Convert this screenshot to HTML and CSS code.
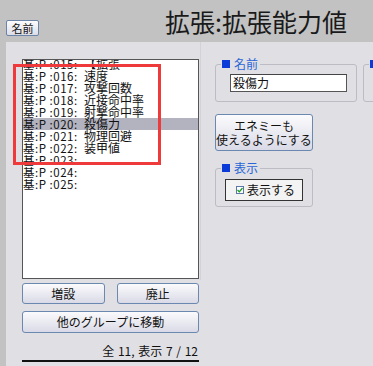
FILE: index.html
```html
<!DOCTYPE html>
<html lang="ja">
<head>
<meta charset="utf-8">
<link rel="stylesheet" href="styles.css">
</head>
<body>
<div class="app">
  <div class="top">
    <button class="name-btn">名前</button>
    <div class="title">拡張:拡張能力値</div>
  </div>
  <div class="main">
    <div class="left">
      <div class="list">
        <div class="rows">
          <div class="row"><span class="code">基:P :015:</span><span class="nm">【拡張</span></div>
          <div class="row"><span class="code">基:P :016:</span><span class="nm">速度</span></div>
          <div class="row"><span class="code">基:P :017:</span><span class="nm">攻撃回数</span></div>
          <div class="row"><span class="code">基:P :018:</span><span class="nm">近接命中率</span></div>
          <div class="row"><span class="code">基:P :019:</span><span class="nm">射撃命中率</span></div>
          <div class="row sel"><span class="code">基:P :020:</span><span class="nm">殺傷力</span></div>
          <div class="row"><span class="code">基:P :021:</span><span class="nm">物理回避</span></div>
          <div class="row"><span class="code">基:P :022:</span><span class="nm">装甲値</span></div>
          <div class="row"><span class="code">基:P :023:</span></div>
          <div class="row"><span class="code">基:P :024:</span></div>
          <div class="row"><span class="code">基:P :025:</span></div>
        </div>
      </div>
      <div class="btns">
        <button class="btn">増設</button>
        <button class="btn">廃止</button>
      </div>
      <button class="btn move">他のグループに移動</button>
      <div class="count">全 11, 表示 7 / 12</div>
      <div class="rule"></div>
    </div>
    <div class="splitter"></div>
    <div class="right">
      <div class="grouprow">
        <fieldset class="grp name-grp">
          <legend><span class="sq"></span>名前</legend>
          <div class="name-body"><div class="input">殺傷力</div></div>
        </fieldset>
        <fieldset class="grp other-grp">
          <legend><span class="sq"></span></legend>
        </fieldset>
      </div>
      <button class="btn enemy">エネミーも<br>使えるようにする</button>
      <fieldset class="grp show-grp">
        <legend><span class="sq"></span>表示</legend>
        <div class="show-body">
          <div class="check-btn"><span class="cb"><svg width="6" height="6" viewBox="0 0 6 6"><path d="M0.5 3 L2.3 4.8 L5.5 1" fill="none" stroke="#1aa01a" stroke-width="1.3"/></svg></span>表示する</div>
        </div>
      </fieldset>
    </div>
  </div>
  <div class="mark"></div>
</div>
</body>
</html>
```

FILE: styles.css
```css
* { box-sizing: border-box; }
html, body { margin: 0; padding: 0; }
body {
  background: #c2c2c2;
  font-family: "Noto Sans CJK JP", sans-serif;
  color: #111;
  overflow: hidden;
}
.app {
  position: relative;
  width: 373px;
  height: 366px;
  overflow: hidden;
}
.top {
  height: 42px;
  display: flex;
  align-items: flex-start;
}
.name-btn {
  margin: 20px 0 0 6px;
  width: 33px;
  height: 16px;
  padding: 0;
  font-family: inherit;
  font-size: 11px;
  line-height: 14px;
  color: #111;
  border: 1px solid #6b84a8;
  border-radius: 2px;
  background: linear-gradient(#fcfcfe, #dcdde8);
}
.title {
  margin: 6px 26px 0 auto;
  font-size: 25px;
  line-height: 30px;
  color: #1a1a1a;
  white-space: nowrap;
}
.main {
  display: flex;
  margin-left: 6px;
  height: 324px;
  background: #e0dfe4;
}
.left {
  flex: none;
  width: 177px;
  margin-left: 16px;
  display: flex;
  flex-direction: column;
}
.list {
  margin-top: 17px;
  height: 220px;
  border: 1px solid #555;
  background: #fff;
  overflow: hidden;
}
.rows { margin-top: -2px; }
.row {
  height: 12px;
  line-height: 12px;
  font-size: 12px;
  white-space: nowrap;
  color: #111;
}
.row.sel { background: #b3b3bf; }
.code {
  display: inline-block;
  width: 61px;
  font-size: 11.5px;
  letter-spacing: 0.5px;
}
.btns {
  display: flex;
  gap: 12px;
  margin-top: 4px;
}
.btn {
  flex: 1;
  height: 21px;
  padding: 0;
  font-family: inherit;
  font-size: 12px;
  line-height: 14px;
  color: #111;
  border: 1px solid #6a88b0;
  border-radius: 3px;
  background: linear-gradient(#fbfbfd, #d9dae6);
}
.move {
  flex: none;
  margin-top: 7px;
  height: 22px;
}
.count {
  margin-top: 11px;
  text-align: right;
  font-size: 12px;
  line-height: 14px;
  padding-right: 1px;
  word-spacing: 1px;
}
.rule {
  margin-top: 2px;
  height: 2px;
  background: #111;
}
.splitter {
  flex: none;
  width: 1px;
  height: 238px;
  margin-left: 1px;
  background: #d3d2d8;
}
.right {
  flex: none;
  margin-left: 14px;
  padding-top: 16px;
  display: flex;
  flex-direction: column;
  align-items: flex-start;
}
.grouprow {
  display: flex;
  gap: 6px;
}
.grp {
  flex: none;
  margin: 0;
  padding: 0;
  min-width: 0;
  border: 1px solid #bdbcc5;
  border-radius: 3px;
}
.grp legend {
  display: flex;
  align-items: center;
  gap: 4px;
  margin-left: 5px;
  padding: 0 2px 0 1px;
  height: 12px;
  font-size: 12px;
  line-height: 12px;
  color: #2a66d6;
}
.sq {
  width: 8px;
  height: 8px;
  background: #0a3bd8;
}
.name-grp { width: 142px; }
.name-body { padding: 4px 0 9px 14px; }
.input {
  width: 117px;
  height: 18px;
  border: 1px solid #555;
  border-top-color: #444;
  background: #fff;
  font-size: 12px;
  line-height: 16px;
  padding-left: 2px;
  color: #111;
}
.other-grp {
  width: 60px;
  height: 44px;
}
.enemy {
  flex: none;
  margin-top: 12px;
  width: 98px;
  height: 37px;
  font-size: 12px;
  line-height: 14px;
}
.show-grp {
  margin-top: 11px;
  width: 98px;
}
.show-body { padding: 5px 0 5px 9px; }
.check-btn {
  width: 78px;
  height: 22px;
  border: 1px solid #333;
  background: #f3f3f3;
  font-size: 12px;
  line-height: 20px;
  display: flex;
  align-items: center;
  padding-left: 10px;
  gap: 3px;
}
.cb {
  width: 8px;
  height: 8px;
  border: 1px solid #5b77a6;
  background: #fff;
  display: flex;
  align-items: center;
  justify-content: center;
}
.mark {
  position: absolute;
  left: 13px;
  top: 64px;
  width: 148px;
  height: 101px;
  border: 3px solid #ef3a3c;
}
```
